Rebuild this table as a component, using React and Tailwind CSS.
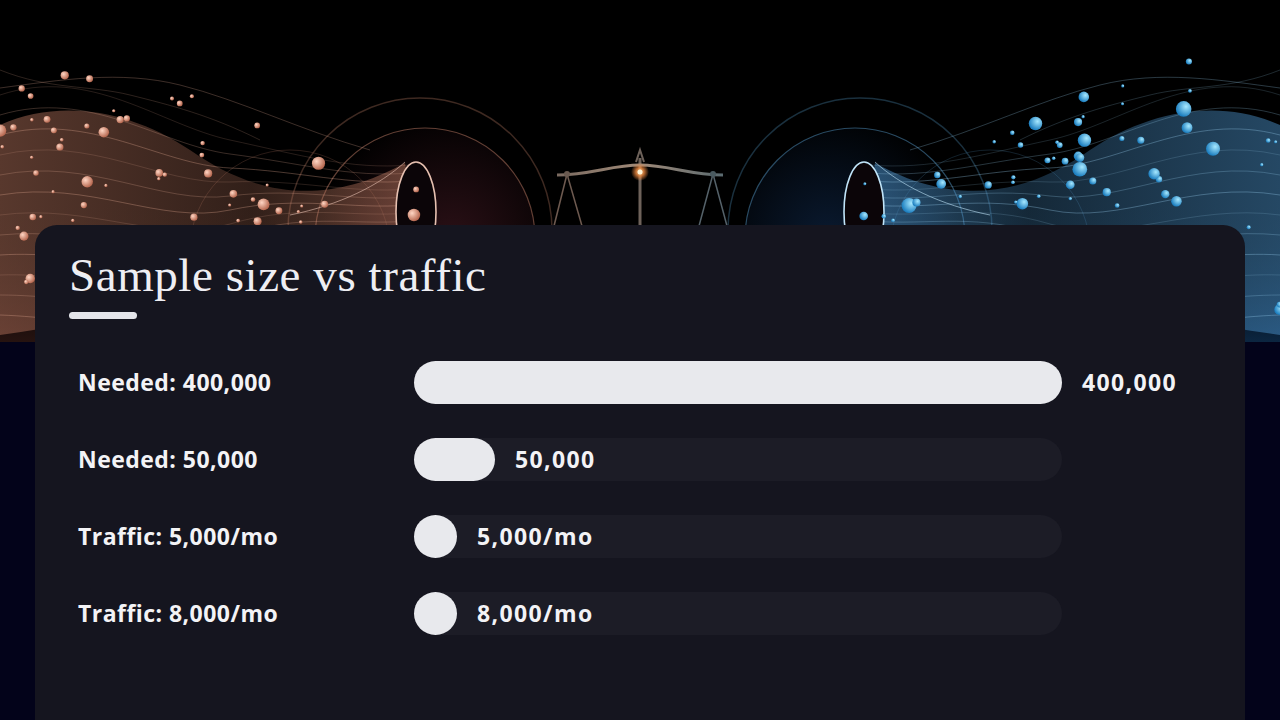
import React from 'react'

const rows = [
  { label: 'Needed: 400,000', value: 400000, text: '400,000' },
  { label: 'Needed: 50,000', value: 50000, text: '50,000' },
  { label: 'Traffic: 5,000/mo', value: 5000, text: '5,000/mo' },
  { label: 'Traffic: 8,000/mo', value: 8000, text: '8,000/mo' },
]

const TRACK = 648
const BAR_H = 43

function makeRand(seed) {
  let s = seed
  return () => {
    s = (s * 16807) % 2147483647
    return (s - 1) / 2147483646
  }
}

function Side({ id, ring, disc, wave, ball, ballDark, thread, rim, seed, flip }) {
  const rnd = makeRand(seed)
  const balls = []
  for (let i = 0; i < 70; i++) {
    const x = rnd() * 420
    const center = 195 - 35 * Math.sin(x / 80) + (x / 430) * -10
    const spread = 110 * (1 - x / 520) + 12
    const y = center + (rnd() - 0.5) * 2 * spread
    const r = 1.5 + rnd() * rnd() * 7
    balls.push({ x, y, r })
  }
  const threads = []
  for (let i = 0; i < 12; i++) {
    const y0 = 95 + i * 20
    const y1 = 165 + i * 8
    threads.push(
      `M0,${y0} C90,${y0 - 30 + i * 3} 160,${y0 + 30} 230,${(y0 + y1) / 2 + 10} S350,${y1 + 5} 410,${y1}`
    )
  }
  return (
    <g transform={flip ? 'translate(1280,0) scale(-1,1)' : undefined}>
      <defs>
        <radialGradient id={`${id}-ball`} cx="35%" cy="35%" r="65%">
          <stop offset="0%" stopColor={ball} />
          <stop offset="100%" stopColor={ballDark} />
        </radialGradient>
        <radialGradient id={`${id}-disc`} cx="62%" cy="50%" r="60%">
          <stop offset="0%" stopColor={disc} />
          <stop offset="100%" stopColor="#000000" />
        </radialGradient>
        <linearGradient id={`${id}-wave`} x1="0" y1="0" x2="1" y2="0">
          <stop offset="0%" stopColor={wave} stopOpacity="0.5" />
          <stop offset="60%" stopColor={wave} stopOpacity="0.28" />
          <stop offset="100%" stopColor={wave} stopOpacity="0.55" />
        </linearGradient>
      </defs>
      <circle cx="420" cy="230" r="132" fill="none" stroke={ring} strokeOpacity="0.45" strokeWidth="1.5" />
      <circle cx="425" cy="238" r="110" fill={`url(#${id}-disc)`} stroke={ring} strokeOpacity="0.7" strokeWidth="1.2" />
      <circle cx="290" cy="250" r="100" fill="none" stroke={ring} strokeOpacity="0.3" strokeWidth="1" />
      <path
        d="M0,125 C60,98 130,110 190,150 C250,192 320,210 405,163 L420,260 C330,265 240,300 0,335 Z"
        fill={`url(#${id}-wave)`}
      />
      {threads.map((d, i) => (
        <path key={i} d={d} fill="none" stroke={thread} strokeOpacity={0.22 + (i % 3) * 0.1} strokeWidth="0.8" />
      ))}
      <path d="M0,88 C60,80 120,70 180,85 S300,130 370,150" fill="none" stroke={thread} strokeOpacity="0.35" strokeWidth="0.8" />
      <path d="M0,70 C50,90 90,85 130,95 S210,115 260,140" fill="none" stroke={thread} strokeOpacity="0.25" strokeWidth="0.8" />
      <path d="M290,215 C340,205 380,185 405,162" fill="none" stroke={rim} strokeOpacity="0.6" strokeWidth="1" />
      <ellipse cx="416" cy="212" rx="20" ry="50" fill="#0b0508" stroke={rim} strokeWidth="1.6" />
      {balls.map((b, i) => (
        <circle key={i} cx={b.x} cy={b.y} r={b.r} fill={`url(#${id}-ball)`} />
      ))}
    </g>
  )
}

function Banner() {
  return (
    <svg width="1280" height="342" viewBox="0 0 1280 342" className="block">
      <defs>
        <radialGradient id="glow" cx="50%" cy="50%" r="50%">
          <stop offset="0%" stopColor="#ffe2b0" />
          <stop offset="45%" stopColor="#f08a40" stopOpacity="0.8" />
          <stop offset="100%" stopColor="#f08a40" stopOpacity="0" />
        </radialGradient>
        <linearGradient id="bottomL" x1="0" y1="0" x2="0" y2="1">
          <stop offset="0%" stopColor="#000" stopOpacity="0" />
          <stop offset="100%" stopColor="#2a1512" stopOpacity="0.9" />
        </linearGradient>
        <linearGradient id="bottomR" x1="0" y1="0" x2="0" y2="1">
          <stop offset="0%" stopColor="#000" stopOpacity="0" />
          <stop offset="100%" stopColor="#0d2a48" stopOpacity="0.9" />
        </linearGradient>
        <linearGradient id="beam" x1="0" y1="0" x2="1" y2="0">
          <stop offset="0%" stopColor="#7a6a60" />
          <stop offset="50%" stopColor="#a08a78" />
          <stop offset="100%" stopColor="#5a6a70" />
        </linearGradient>
      </defs>
      <rect width="1280" height="342" fill="#000" />
      <rect x="0" y="200" width="430" height="142" fill="url(#bottomL)" />
      <rect x="850" y="200" width="430" height="142" fill="url(#bottomR)" />
      <Side
        id="warm"
        ring="#8a5a4a"
        disc="#2a1016"
        wave="#b0705a"
        ball="#ffd6c4"
        ballDark="#b86a52"
        thread="#e0a890"
        rim="#e6c0b0"
        seed={17}
      />
      <Side
        id="cool"
        ring="#3a6a8a"
        disc="#0a1a30"
        wave="#4a90c8"
        ball="#a6e8ff"
        ballDark="#1d7fc0"
        thread="#9ad0f0"
        rim="#c0e4f8"
        seed={91}
        flip
      />
      <g stroke="url(#beam)" fill="none" strokeWidth="2">
        <line x1="640" y1="158" x2="640" y2="228" strokeWidth="3" stroke="#6e625a" />
        <path d="M636,162 L640,150 L644,162" stroke="#6e625a" />
        <path d="M557,175 C590,175 612,165 640,165 C668,165 690,175 723,175" strokeWidth="3" />
        <line x1="567" y1="174" x2="554" y2="226" strokeWidth="1.5" stroke="#6e5a50" />
        <line x1="567" y1="174" x2="582" y2="226" strokeWidth="1.5" stroke="#6e5a50" />
        <line x1="713" y1="174" x2="699" y2="226" strokeWidth="1.5" stroke="#55626a" />
        <line x1="713" y1="174" x2="727" y2="226" strokeWidth="1.5" stroke="#55626a" />
      </g>
      <circle cx="567" cy="174" r="3" fill="#6a5a50" />
      <circle cx="713" cy="174" r="3" fill="#4a5a60" />
      <circle cx="640" cy="172" r="9" fill="url(#glow)" />
      <circle cx="640" cy="172" r="2.5" fill="#fff4d8" />
    </svg>
  )
}

function BarRow({ row }) {
  const w = Math.max(BAR_H, (row.value / 400000) * TRACK)
  return (
    <div className="flex items-center">
      <div className="w-[336px] shrink-0 text-[23px] font-bold tracking-[0.02em] text-[#f3f3f6] font-['Open_Sans',sans-serif]">
        {row.label}
      </div>
      <div className="flex h-[43px] w-[648px] items-center rounded-full bg-[#1c1c26]">
        <div className="h-full shrink-0 rounded-full bg-[#e8e9ed]" style={{ width: w }} />
        <span className="ml-5 whitespace-nowrap text-[23px] font-bold tracking-[0.06em] text-[#f3f3f6] font-['Open_Sans',sans-serif]">
          {row.text}
        </span>
      </div>
    </div>
  )
}

export default function App() {
  return (
    <div className="h-screen overflow-hidden bg-[#03031a]">
      <div className="h-[342px] bg-black">
        <Banner />
      </div>
      <div className="relative mx-[35px] -mt-[117px] h-[520px] rounded-[22px] bg-[#15151f] px-[34px] pt-[22px]">
        <h1 className="text-[47px] leading-[56px] tracking-[0.012em] text-[#eeeef3] font-['Liberation_Serif',serif]">
          Sample size vs traffic
        </h1>
        <div className="mt-[9px] h-[7px] w-[68px] rounded-full bg-[#e4e5ea]" />
        <div className="mt-[42px] flex flex-col gap-[34px] pl-[9px]">
          {rows.map((r) => (
            <BarRow key={r.label} row={r} />
          ))}
        </div>
      </div>
    </div>
  )
}
